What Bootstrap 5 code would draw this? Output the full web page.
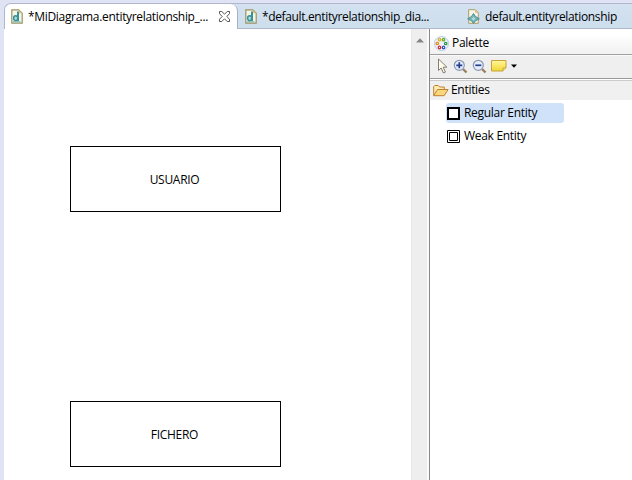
<!DOCTYPE html>
<html lang="es">
<head>
<meta charset="utf-8">
<meta name="viewport" content="width=device-width, initial-scale=1">
<title>Entity relationship editor</title>
<link href="https://cdn.jsdelivr.net/npm/bootstrap@5.3.0/dist/css/bootstrap.min.css" rel="stylesheet">
<style>
body{font:12px/16px "Open Sans","Noto Sans",sans-serif;color:#000;background:#dfe3f4;letter-spacing:-.3px}
svg{flex:none;display:block}
.workbench{height:480px;padding:3px 0 0 4px}
.tab-strip{height:26px;background:linear-gradient(#d3e1f0,#cddeed);border:solid #b0b6cb;border-width:1px 0 1px 1px;border-top-left-radius:7px}
.editor-tab{height:24px;padding-top:1px}
.editor-tab.active{width:233px;height:26px;background:#fff;border-right:1px solid #a9afc5;border-radius:6px 7px 0 0;padding:0 7px 1px 6px}
.tab-one{margin-left:5px;letter-spacing:-.32px}
.tab-two,.tab-three{margin-left:5px}
.tab-two{letter-spacing:-.36px}
.tab-three{letter-spacing:-.35px}
.second-tab{width:223px;padding-left:7px}
.third-tab{padding-left:6px}
.diagram{width:407px;position:relative}
.entity{position:absolute;left:66px;width:211px;height:66px;border:1px solid #000;padding:2px 2px 0 0}
.scroll-track{width:18px;background:#eee;border-left:1px solid #e6e6e6;border-right:2px solid #fafafa;padding:9px 0 0 4px}
.palette{border-left:1px solid #888}
.palette-head{height:26px;padding:3px 0 0 4px;background:linear-gradient(#fff 20%,#f1f1f1);border-bottom:1px solid #a0a0a0}
.palette-tools{height:24px;background:#efefef;border-top:1px solid #fafafa;border-bottom:1px solid #999;padding:0 0 2px 6px}
.drawer{height:21px;background:#f0f0f0;border-top:1px solid #fff;box-shadow:inset 0 1px #ccc;padding-left:3px}
.tool-entry{width:118px;height:20px;padding-left:1px;border-radius:3px}
.tool-entry.selected{background:#cfe2fa}
.tool-list{padding:3px 0 0 16px;gap:3px}
</style>
<script src="https://cdn.jsdelivr.net/npm/bootstrap@5.3.0/dist/js/bootstrap.bundle.min.js"></script>
</head>
<body class="overflow-hidden">
<svg width="0" height="0" class="position-absolute">
 <symbol id="doc-d" viewBox="0 0 12 15"><path d="M.8.8h7l3.4 3.4v9.9H.8z" fill="#f3f6e5" stroke="#9b9365" stroke-width="1.2"/><path d="M7.8.8v3.4h3.4z" fill="#d9c27d"/><path d="M7 2.5v9.6" stroke="#37929b" stroke-width="2"/><ellipse cx="4.7" cy="9.2" rx="2.1" ry="2.5" fill="#a9d9d8" stroke="#37929b" stroke-width="1.5"/><path d="M2 12.8h7.5" stroke="#73b6b5"/></symbol>
</svg>
<div class="workbench d-flex flex-column">
 <div class="tab-strip d-flex">
  <div class="editor-tab active d-flex align-items-center flex-shrink-0">
   <svg width="12" height="15"><use href="#doc-d"/></svg>
   <span class="text-nowrap tab-one">*MiDiagrama.entityrelationship_...</span>
   <svg class="ms-auto" width="11" height="11" viewBox="0 0 11 11" fill="#fff" stroke="#555"><path d="M.5.5h2.3l2.7 2.7L8.2.5h2.3v2.2L7.8 5.5l2.7 2.7v2.3H8.2L5.5 7.8l-2.7 2.7H.5V8.2l2.7-2.7L.5 2.7z"/></svg>
  </div>
  <div class="editor-tab second-tab d-flex align-items-center">
   <svg width="12" height="15"><use href="#doc-d"/></svg>
   <span class="text-nowrap tab-two">*default.entityrelationship_dia...</span>
  </div>
  <div class="editor-tab third-tab d-flex align-items-center">
   <svg width="13" height="15" viewBox="0 0 13 15"><path d="M1.7.7h6.5l3.1 3.1v10.5H1.7z" fill="#f7f7e9" stroke="#ab9b68"/><path d="M8.2.7v3.1h3.1z" fill="#ddb86b"/><path d="M6.5 4.5L8.5 7.5 12.3 9.8 8.5 11.8 6.5 14.5 4.5 11.8.7 9.8 4.5 7.5z" fill="#78b5b4" stroke="#468f94"/><path d="M6.5 8l1.8 1.8-1.8 1.8-1.8-1.8z" fill="#b9dfdc"/></svg>
   <span class="text-nowrap tab-three">default.entityrelationship</span>
  </div>
 </div>
 <div class="d-flex flex-grow-1 bg-white">
  <main class="diagram flex-shrink-0">
   <div class="entity d-flex align-items-center justify-content-center" style="top:117px">USUARIO</div>
   <div class="entity d-flex align-items-center justify-content-center" style="top:372px">FICHERO</div>
  </main>
  <div class="scroll-track flex-shrink-0"><svg width="8" height="5"><path d="M0 4.5L4 .3l4 4.2z" fill="#858585"/></svg></div>
  <aside class="palette flex-grow-1">
   <div class="palette-head d-flex align-items-center">
    <svg width="15" height="15" viewBox="0 0 15 15" fill="#fff" stroke-width="1.3"><circle cx="7.5" cy="7.5" r="7" fill="#eef3fb" stroke="#b9cae5" stroke-width="1"/><circle cx="5.5" cy="3.7" r="1.2" stroke="#d8b41d"/><circle cx="9.5" cy="3.7" r="1.2" stroke="#69a937"/><circle cx="3.3" cy="7.5" r="1.2" stroke="#e38b20"/><circle cx="11.7" cy="7.5" r="1.2" stroke="#299849"/><circle cx="5.5" cy="11.4" r="1.2" stroke="#d52d37"/><circle cx="9.5" cy="11.4" r="1.2" stroke="#3357b7"/></svg>
    <span style="margin-left:3px">Palette</span>
   </div>
   <div class="palette-tools d-flex align-items-center">
    <svg width="13" height="16" viewBox="0 0 13 16"><path d="M2.5 1v11.5l2.7-2.5 2.2 5 2-.9-2.2-4.900h3.700z" fill="#fffdf0" stroke="#837d70"/></svg>
    <svg class="ms-1" width="15" height="15" viewBox="0 0 15 15"><path d="M10 10l3.500 3.500" stroke="#9b8158" stroke-width="2.400"/><circle cx="6.300" cy="6.300" r="5" fill="#e4eefb" stroke="#8c98b3" stroke-width="1.200"/><path d="M3.300 6.300h6M6.300 3.300v6" stroke="#263f8d" stroke-width="1.700"/></svg>
    <svg style="margin-left:4px" width="15" height="15" viewBox="0 0 15 15"><path d="M10 10l3.500 3.500" stroke="#9b8158" stroke-width="2.400"/><circle cx="6.300" cy="6.300" r="5" fill="#e4eefb" stroke="#8c98b3" stroke-width="1.200"/><path d="M3.300 6.300h6" stroke="#263f8d" stroke-width="1.700"/></svg>
    <svg class="ms-1" width="16" height="12" viewBox="0 0 16 12"><defs><linearGradient id="note" y2="1" x2="0"><stop stop-color="#fff89a"/><stop offset="1" stop-color="#f3d633"/></linearGradient></defs><path d="M.5.5h14.500v7.500l-3 3H.5z" fill="url(#note)" stroke="#c8a33c"/><path d="M12 11V8h3" fill="#fff0a0" stroke="#c8a33c"/></svg>
    <svg class="ms-1" width="6" height="4"><path d="M0 .5h6L3 3.800z" fill="#000"/></svg>
   </div>
   <div class="drawer d-flex align-items-center">
    <svg width="16" height="13" viewBox="0 0 16 13"><path d="M.7 11.500V2.500l1-1h3.500l1.500 1.500h4.600v2.500" fill="#ffecae" stroke="#bd8132"/><path d="M.7 11.700L4.500 5.500h10.600l-3.900 6.200z" fill="#fbd77c" stroke="#bd8132"/></svg>
    <span style="margin-left:2px">Entities</span>
   </div>
   <div class="tool-list d-flex flex-column">
    <div class="tool-entry selected d-flex align-items-center"><svg width="13" height="13"><path d="M1 1h11v11H1z" fill="#fff" stroke="#000" stroke-width="2"/></svg><span class="ms-1">Regular Entity</span></div>
    <div class="tool-entry d-flex align-items-center"><svg width="13" height="13" fill="#fff" stroke="#000"><path d="M.5.5h12v12H.5zM2.500 2.500h8v8h-8z"/></svg><span class="ms-1">Weak Entity</span></div>
   </div>
  </aside>
 </div>
</div>
</body>
</html>
